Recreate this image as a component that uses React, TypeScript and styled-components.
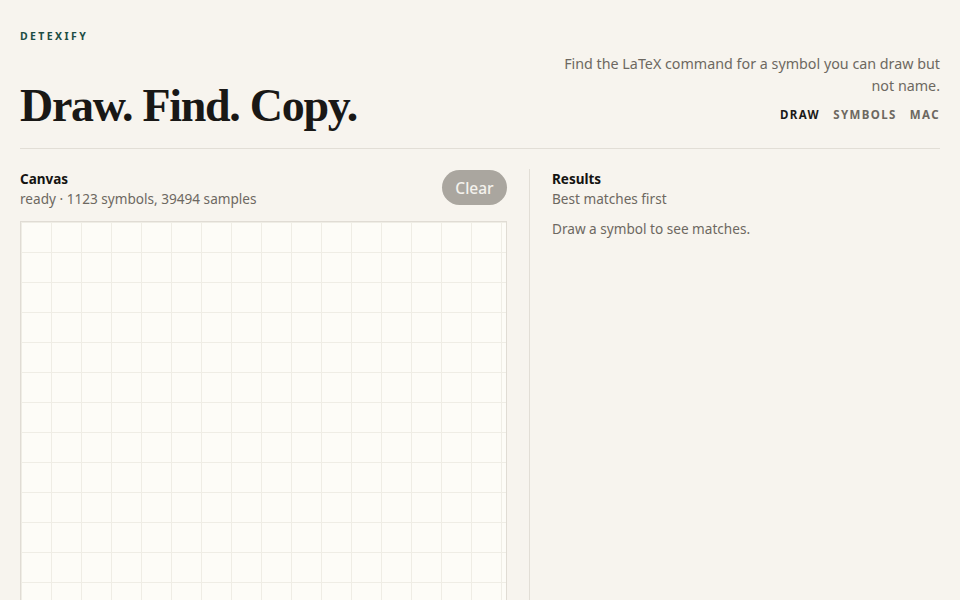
import styled, { createGlobalStyle } from "styled-components";

const GlobalStyle = createGlobalStyle`
  html, body {
    margin: 0;
    background: #f7f4ee;
    color: #1b1a18;
    font-family: "Noto Sans", "Open Sans", sans-serif;
  }
`;

const navLinks = [
  { label: "DRAW", active: true },
  { label: "SYMBOLS", active: false },
  { label: "MAC", active: false },
];

export default function App() {
  return (
    <>
      <GlobalStyle />
      <Page>
        <Header>
          <Brand>
            <Logo>DETEXIFY</Logo>
            <Title>Draw. Find. Copy.</Title>
          </Brand>
          <HeaderSide>
            <Tagline>
              Find the LaTeX command for a symbol you can draw but not name.
            </Tagline>
            <Nav>
              {navLinks.map((l) => (
                <NavLink key={l.label} $active={l.active}>
                  {l.label}
                </NavLink>
              ))}
            </Nav>
          </HeaderSide>
        </Header>
        <Main>
          <CanvasPanel>
            <PanelHead>
              <div>
                <PanelTitle>Canvas</PanelTitle>
                <PanelSub>ready · 1123 symbols, 39494 samples</PanelSub>
              </div>
              <ClearButton disabled>Clear</ClearButton>
            </PanelHead>
            <DrawArea />
          </CanvasPanel>
          <ResultsPanel>
            <PanelTitle>Results</PanelTitle>
            <PanelSub>Best matches first</PanelSub>
            <EmptyNote>Draw a symbol to see matches.</EmptyNote>
          </ResultsPanel>
        </Main>
      </Page>
    </>
  );
}

const Page = styled.div`
  padding: 30px 20px 0;
  height: 600px;
  box-sizing: border-box;
  overflow: hidden;
`;

const Header = styled.header`
  display: flex;
  justify-content: space-between;
  align-items: flex-end;
  padding-bottom: 18px;
  border-bottom: 1px solid #e2ded6;
`;

const Brand = styled.div`
  display: flex;
  flex-direction: column;
`;

const Logo = styled.div`
  font-size: 10.5px;
  font-weight: 700;
  letter-spacing: 2.4px;
  color: #1d4d44;
  line-height: 12px;
`;

const Title = styled.h1`
  margin: 40px 0 0;
  font-family: "Liberation Serif", "DejaVu Serif", serif;
  font-size: 46px;
  font-weight: 700;
  letter-spacing: -1.3px;
  line-height: 48px;
  color: #191816;
`;

const HeaderSide = styled.div`
  display: flex;
  flex-direction: column;
  align-items: flex-end;
  width: 382px;
  padding-bottom: 8px;
`;

const Tagline = styled.p`
  margin: 0;
  font-size: 14.3px;
  line-height: 22px;
  color: #6d6861;
  text-align: right;
`;

const Nav = styled.nav`
  display: flex;
  gap: 13px;
  margin-top: 10px;
`;

const NavLink = styled.a<{ $active: boolean }>`
  font-size: 11.5px;
  font-weight: 700;
  letter-spacing: 1.4px;
  color: ${(p) => (p.$active ? "#1b1a18" : "#6d6861")};
  cursor: pointer;
`;

const Main = styled.main`
  display: grid;
  grid-template-columns: 487px 1fr;
  column-gap: 22px;
  padding-top: 20px;
`;

const CanvasPanel = styled.section`
  display: flex;
  flex-direction: column;
`;

const PanelHead = styled.div`
  display: flex;
  justify-content: space-between;
  align-items: flex-start;
  margin-bottom: 12px;
`;

const PanelTitle = styled.h2`
  margin: 0;
  font-size: 13.5px;
  font-weight: 700;
  line-height: 20px;
  color: #141311;
`;

const PanelSub = styled.div`
  font-size: 13.6px;
  line-height: 20px;
  color: #6d6861;
`;

const ClearButton = styled.button`
  width: 65px;
  height: 35px;
  margin-top: 1px;
  border: none;
  border-radius: 18px;
  background: #aaa69f;
  color: #f4f2ed;
  font-family: inherit;
  font-size: 15.5px;
  font-weight: 500;
  cursor: default;
`;

const DrawArea = styled.div`
  height: 420px;
  border: 1px solid #e0dcd4;
  background-color: #fdfcf7;
  background-image: linear-gradient(to right, #efede5 1px, transparent 1px),
    linear-gradient(to bottom, #efede5 1px, transparent 1px);
  background-size: 30px 30px;
  background-position: 0 0;
`;

const ResultsPanel = styled.section`
  border-left: 1px solid #e2ded6;
  padding-left: 22px;
  min-height: 460px;
`;

const EmptyNote = styled.p`
  margin: 10px 0 0;
  font-size: 13.6px;
  line-height: 20px;
  color: #6d6861;
`;
